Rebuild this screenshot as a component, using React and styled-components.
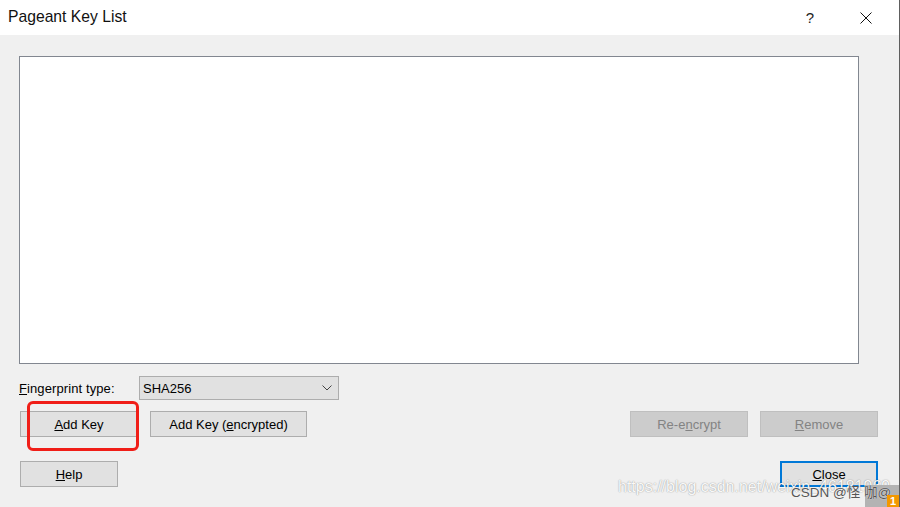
import React from "react";
import styled, { createGlobalStyle } from "styled-components";

const Global = createGlobalStyle`
  html, body { margin: 0; padding: 0; background: #f0f0f0; }
  body { font-family: "Liberation Sans", Arial, sans-serif; }
  * { box-sizing: border-box; }
`;

const Window = styled.div`
  position: relative;
  width: 900px;
  height: 507px;
  display: flex;
  flex-direction: column;
  border-right: 1px solid #5e5e5e;
  overflow: hidden;
  background: #f0f0f0;
  color: #000;
`;

const TitleBar = styled.div`
  height: 35px;
  flex: none;
  background: #fff;
  display: flex;
  align-items: center;
  padding-left: 8px;
`;

const Title = styled.div`
  font-size: 15.7px;
  color: #111;
  flex: 1;
  padding-bottom: 1px;
`;

const TitleButtons = styled.div`
  display: flex;
  align-items: center;
  height: 100%;
`;

const CaptionButton = styled.div`
  width: ${(p) => p.$w}px;
  height: 100%;
  display: flex;
  align-items: center;
  justify-content: center;
  font-size: 15px;
  color: #222;
`;

const Body = styled.div`
  flex: 1;
  display: flex;
  flex-direction: column;
  padding: 21px 21px 0 19px;
`;

const ListBox = styled.div`
  width: 840px;
  height: 308px;
  background: #fff;
  border: 1px solid #828790;
`;

const FieldRow = styled.div`
  margin-top: 12px;
  display: flex;
  align-items: center;
  height: 24px;
`;

const Label = styled.div`
  width: 120px;
  font-size: 13px;
  letter-spacing: 0.1px;
  padding-top: 1px;
`;

const Select = styled.div`
  width: 200px;
  height: 24px;
  border: 1px solid #adadad;
  background: #e1e1e1;
  display: flex;
  align-items: center;
  justify-content: space-between;
  padding: 0 6px 0 3px;
  font-size: 13px;
`;

const ButtonRow = styled.div`
  display: flex;
  align-items: center;
  margin-top: ${(p) => p.$top}px;
  padding-left: 1px;
  gap: 12px;
`;

const Spacer = styled.div`
  flex: 1;
`;

const Button = styled.div`
  width: ${(p) => p.$w}px;
  height: 26px;
  display: flex;
  align-items: center;
  justify-content: center;
  font-size: 13px;
  background: ${(p) => (p.$disabled ? "#cccccc" : "#e1e1e1")};
  color: ${(p) => (p.$disabled ? "#838383" : "#000")};
  border: ${(p) =>
    p.$default ? "2px solid #0078d7" : p.$disabled ? "1px solid #bfbfbf" : "1px solid #adadad"};
`;

const Marked = styled.div`
  position: relative;
`;

const RedBox = styled.div`
  position: absolute;
  left: 7px;
  top: -10px;
  width: 112px;
  height: 50px;
  border: 3.5px solid #f01e18;
  border-radius: 6px;
  pointer-events: none;
`;

const Watermark = styled.div`
  position: absolute;
  left: 618px;
  top: 478px;
  font-size: 16px;
  color: rgba(255, 255, 255, 0.95);
  text-shadow: 0 0 1px rgba(0, 0, 0, 0.35), 0 0 2px rgba(0, 0, 0, 0.15);
  white-space: nowrap;
`;

const Credit = styled.div`
  position: absolute;
  left: 791px;
  top: 481px;
  font-family: "Liberation Sans", "Noto Sans CJK SC", sans-serif;
  font-size: 13.5px;
  color: #555;
  text-shadow: 0 0 1px #fff;
  white-space: nowrap;
`;

const CornerBox = styled.div`
  position: absolute;
  right: 0;
  bottom: 0;
  width: 34px;
  height: 22px;
  background: #b3b3b3;
`;

const Badge = styled.div`
  position: absolute;
  right: 0;
  bottom: 0;
  width: 12px;
  height: 12px;
  background: #f39800;
  color: #fff;
  font-size: 11px;
  font-weight: bold;
  display: flex;
  align-items: flex-end;
  justify-content: center;
  line-height: 11px;
`;

const U = styled.span`
  text-decoration: underline;
  text-underline-offset: 1px;
`;

export default function App() {
  return (
    <>
      <Global />
      <Window>
        <TitleBar>
          <Title>Pageant Key List</Title>
          <TitleButtons>
            <CaptionButton $w={46}>?</CaptionButton>
            <CaptionButton $w={66}>
              <svg width="12" height="12" viewBox="0 0 12 12">
                <path d="M0.5 0.5 L11.5 11.5 M11.5 0.5 L0.5 11.5" stroke="#111" strokeWidth="1" fill="none" />
              </svg>
            </CaptionButton>
          </TitleButtons>
        </TitleBar>
        <Body>
          <ListBox />
          <FieldRow>
            <Label>
              <U>F</U>ingerprint type:
            </Label>
            <Select>
              <span>SHA256</span>
              <svg width="10" height="6" viewBox="0 0 10 6">
                <path d="M0.5 0.5 L5 5 L9.5 0.5" stroke="#444" strokeWidth="1" fill="none" />
              </svg>
            </Select>
          </FieldRow>
          <ButtonRow $top={11}>
            <Marked>
              <Button $w={118}>
                <span>
                  <U>A</U>dd Key
                </span>
              </Button>
              <RedBox />
            </Marked>
            <Button $w={157}>
              <span>
                Add Key (<U>e</U>ncrypted)
              </span>
            </Button>
            <Spacer />
            <Button $w={118} $disabled>
              <span>
                Re-e<U>n</U>crypt
              </span>
            </Button>
            <Button $w={118} $disabled>
              <span>
                <U>R</U>emove
              </span>
            </Button>
          </ButtonRow>
          <ButtonRow $top={24}>
            <Button $w={98}>
              <span>
                <U>H</U>elp
              </span>
            </Button>
            <Spacer />
            <Button $w={98} $default>
              <span>
                <U>C</U>lose
              </span>
            </Button>
          </ButtonRow>
        </Body>
        <Watermark>https://blog.csdn.net/weixin_46181969</Watermark>
        <CornerBox />
        <Credit>CSDN @怪 咖@</Credit>
        <Badge>1</Badge>
      </Window>
    </>
  );
}
